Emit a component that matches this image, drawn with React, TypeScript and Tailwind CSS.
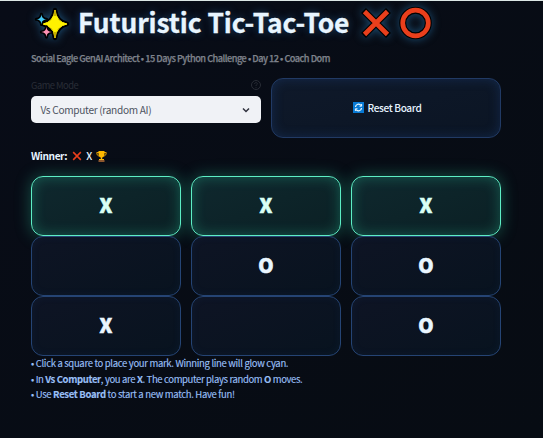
import React from 'react';

const board = ['X', 'X', 'X', '', 'O', 'O', 'X', '', 'O'];
const winningLine = [0, 1, 2];
const star = 'M12 0 C12.8 8 16 11.2 24 12 C16 12.8 12.8 16 12 24 C11.2 16 8 12.8 0 12 C8 11.2 11.2 8 12 0Z';

function Sparkles() {
  return (
    <svg className="h-[34px] w-[34px] shrink-0 overflow-visible drop-shadow-[0_0_4px_#1c527a]" viewBox="0 0 34 34">
      <g stroke="#000" strokeLinejoin="round">
        <path d="M20 4 Q21.500 15.500 32 18 Q21.500 20.500 20 32 Q18.500 20.500 8 18 Q18.500 15.500 20 4Z" fill="#fff200" strokeWidth="4.5" />
        <path d="M20 4 Q21.500 16 32 18 Q21.500 20 20 32 Q18.500 20 8 18 Q18.500 16 20 4Z" fill="#fff200" stroke="#fff200" strokeWidth="1" />
        <path d="M19.100 4h1.8v6h-1.8zM19.100 26h1.8v6h-1.8z" fill="#c5a900" stroke="none" />
        <path d={star} transform="translate(1.300 8.200) scale(.43)" fill="#45c9f5" strokeWidth="7" paintOrder="stroke" />
        <path d={star} transform="translate(6.300 20.800) scale(.43)" fill="#ff91b5" strokeWidth="7" paintOrder="stroke" />
      </g>
    </svg>
  );
}

function Cross({ className, outlined = false }: { className: string; outlined?: boolean }) {
  return (
    <svg className={className} viewBox="0 0 30 30" fill="none">
      {outlined && <path d="M2.500 2.500L27.500 27.500M27.500 2.500L2.500 27.500" stroke="#000" strokeWidth="7" />}
      <path d="M3.500 3.500L26.500 26.500M26.500 3.500L3.500 26.500" stroke="#ea3f1c" strokeWidth="4.700" />
    </svg>
  );
}

function Trophy() {
  return (
    <svg className="ml-[4px] h-[11px] w-[11px]" viewBox="0 0 11 11">
      <path d="M3 1.5H.8C.8 4 1.8 5 3.6 5M8 1.5h2.2C10.2 4 9.2 5 7.4 5" fill="none" stroke="#e9a100" />
      <path d="M2.5 0h6v3.2C8.500 5.200 7.200 6.300 6.200 6.600V8H8v1H3V8h1.800V6.600C3.800 6.300 2.500 5.200 2.500 3.200Z" fill="#ffb900" />
      <path d="M2.500 9h6v2h-6z" fill="#8e562e" />
    </svg>
  );
}

function Cell({ mark, won }: { mark: string; won: boolean }) {
  const tone = won
    ? 'border-[#5eeec5] bg-linear-to-br from-[#0f282e] to-[#0b2024] text-[#d9fff5] shadow-[0_0_16px_rgba(45,212,165,0.35),inset_0_0_14px_rgba(45,212,165,0.32)]'
    : 'border-[#254474] bg-linear-to-br from-[#0e1424] to-[#08131f] text-[#eaf6ff] shadow-[inset_0_0_8px_rgba(40,90,165,0.09)]';
  return (
    <button className={`flex h-[60px] items-center justify-center rounded-[12px] border pb-[2px] text-[19.500px] leading-none font-black [-webkit-text-stroke:0.6px_currentColor] ${tone}`}>
      {mark}
    </button>
  );
}

export default function App() {
  return (
    <main className="h-[438px] w-[543px] overflow-hidden border-t border-[#dce7e5] bg-linear-to-br from-[#080c17] to-[#070c13] pl-[31px] font-['Noto_Sans_CJK_JP','Noto_Sans',sans-serif] text-[#e6f3ff]">
      <header className="flex h-[43px] items-center">
        <div className="ml-[4px]"><Sparkles /></div>
        <h1 className="ml-[9px] w-[271px] pb-[2px] text-[26.4px] leading-[42px] font-bold tracking-[-0.11px] whitespace-nowrap text-[#e8f5ff] [-webkit-text-stroke:0.3px_currentColor] [text-shadow:0_0_8px_rgba(54,139,220,0.4)]">Futuristic Tic-Tac-Toe</h1>
        <Cross outlined className="ml-[12px] h-[30px] w-[30px] shrink-0 drop-shadow-[0_0_4px_#1c527a]" />
        <svg className="ml-[8px] h-[34px] w-[34px] shrink-0 overflow-visible drop-shadow-[0_0_4px_#1c527a]" viewBox="0 0 34 34" fill="none">
          <circle cx="16.500" cy="17" r="12.800" stroke="#000" strokeWidth="7" />
          <circle cx="16.500" cy="17" r="12.800" stroke="#ea3f1c" strokeWidth="4.700" />
        </svg>
      </header>
      <p className="mt-[6px] h-[16px] text-[9.200px] leading-[16px] font-medium tracking-[-0.5px] whitespace-nowrap text-[#7e828b] [-webkit-text-stroke:0.25px_currentColor]">Social Eagle GenAI Architect • 15 Days Python Challenge • Day 12 • Coach Dom</p>
      <section className="mt-[12px] grid w-[470px] grid-cols-2 gap-[10px]">
        <div>
          <div className="flex h-[18px] items-center justify-between text-[9.300px] leading-[14px] tracking-[-0.5px] text-[#292d36]">
            <span className="pb-[4px]">Game Mode</span>
            <svg className="mb-[4px] h-[10px] w-[10px]" viewBox="0 0 10 10" fill="none" stroke="currentColor"><circle cx="5" cy="5" r="4.500" /><path d="M3.600 4C3.600 2 6.600 2.200 6.300 4C6.200 4.800 5 4.700 5 6M5 7v.8" /></svg>
          </div>
          <button className="flex h-[27px] w-full items-center justify-between rounded-[5px] bg-[#f0f2f6] pr-[11px] pl-[9.500px] text-[10.100px] tracking-[-0.3px] text-[#4d535f]">
            <span className="pt-px leading-[18px]">Vs Computer (random AI)</span>
            <svg className="h-[8px] w-[8px]" viewBox="0 0 8 8" fill="none" stroke="#31333f" strokeWidth="1.500"><path d="M1 2.500L4 5.500L7 2.500" /></svg>
          </button>
        </div>
        <button className="flex h-[60px] items-center justify-center rounded-[12px] border border-[#213a64] bg-linear-to-br from-[#0f192a] to-[#0b1524] pb-px pl-[2px] text-[10.100px] font-medium tracking-[-0.36px] shadow-[inset_0_0_12px_rgba(35,83,160,0.3)]">
          <svg className="mr-[4px] h-[11px] w-[11px]" viewBox="0 0 11 11" fill="none"><path d="M0 0h11v11H0z" fill="#087ad5" /><path d="M2.500 5A3 3 0 0 1 8 3.500M8.500 6A3 3 0 0 1 3 7.500" stroke="#eefaff" strokeWidth="1.200" /><path d="M8.600 2v2.200H6.500M2.400 9V6.800h2.100" stroke="#eefaff" /></svg>
          Reset Board
        </button>
      </section>
      <div className="mt-[10px] flex h-[16px] items-center text-[10.100px] leading-[16px] font-bold tracking-[-0.4px] whitespace-nowrap">
        <span>Winner:</span><Cross className="ml-[5px] h-[10px] w-[10px]" /><span className="ml-[4px] font-medium">X</span><Trophy />
      </div>
      <section className="mt-[12px] grid w-[470px] grid-cols-3 gap-x-[10px]">
        {board.map((mark, i) => <Cell key={i} mark={mark} won={winningLine.includes(i)} />)}
      </section>
      <footer className="text-[9.500px] leading-[15.500px] tracking-[-0.32px] whitespace-nowrap text-[#98bff5] [-webkit-text-stroke:0.15px_currentColor]">
        <p>• Click a square to place your mark. Winning line will glow cyan.</p>
        <p className="tracking-[-0.36px]">• In <b className="font-bold">Vs Computer</b>, you are <b className="font-bold">X</b>. The computer plays random <b className="font-bold">O</b> moves.</p>
        <p>• Use <b className="font-bold">Reset Board</b> to start a new match. Have fun!</p>
      </footer>
    </main>
  );
}
